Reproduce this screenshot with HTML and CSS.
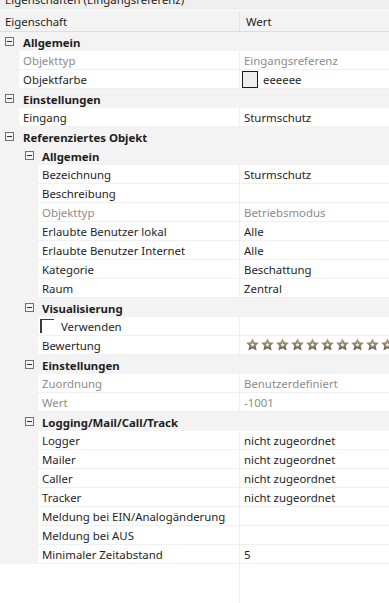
FILE: index.html
```html
<!DOCTYPE html>
<html lang="de">
<head>
<meta charset="utf-8">
<link rel="stylesheet" href="styles.css">
</head>
<body>
<div class="page">
  <div class="title"><span>Eigenschaften (Eingangsreferenz)</span></div>
  <div class="head"><div class="hname">Eigenschaft</div><div class="hval">Wert</div></div>
  <div class="grid">
    <div class="sec l0"><span class="tog"></span><span>Allgemein</span></div>
    <div class="row l1 dis"><div class="name">Objekttyp</div><div class="val">Eingangsreferenz</div></div>
    <div class="row l1"><div class="name">Objektfarbe</div><div class="val"><span class="swatch"></span>eeeeee</div></div>
    <div class="sec l0"><span class="tog"></span><span>Einstellungen</span></div>
    <div class="row l1"><div class="name">Eingang</div><div class="val">Sturmschutz</div></div>
    <div class="sec l0"><span class="tog"></span><span>Referenziertes Objekt</span></div>
    <div class="sec l1s"><span class="tog"></span><span>Allgemein</span></div>
    <div class="row l2"><div class="name">Bezeichnung</div><div class="val">Sturmschutz</div></div>
    <div class="row l2"><div class="name">Beschreibung</div><div class="val"></div></div>
    <div class="row l2 dis"><div class="name">Objekttyp</div><div class="val">Betriebsmodus</div></div>
    <div class="row l2"><div class="name">Erlaubte Benutzer lokal</div><div class="val">Alle</div></div>
    <div class="row l2"><div class="name">Erlaubte Benutzer Internet</div><div class="val">Alle</div></div>
    <div class="row l2"><div class="name">Kategorie</div><div class="val">Beschattung</div></div>
    <div class="row l2"><div class="name">Raum</div><div class="val">Zentral</div></div>
    <div class="sec l1s"><span class="tog"></span><span>Visualisierung</span></div>
    <div class="row l2"><div class="name chk"><span class="box"></span>Verwenden</div><div class="val"></div></div>
    <div class="row l2"><div class="name">Bewertung</div><div class="val stars">
      <svg class="star" viewBox="0 0 12 12"><use href="#st"/></svg>
      <svg class="star" viewBox="0 0 12 12"><use href="#st"/></svg>
      <svg class="star" viewBox="0 0 12 12"><use href="#st"/></svg>
      <svg class="star" viewBox="0 0 12 12"><use href="#st"/></svg>
      <svg class="star" viewBox="0 0 12 12"><use href="#st"/></svg>
      <svg class="star" viewBox="0 0 12 12"><use href="#st"/></svg>
      <svg class="star" viewBox="0 0 12 12"><use href="#st"/></svg>
      <svg class="star" viewBox="0 0 12 12"><use href="#st"/></svg>
      <svg class="star" viewBox="0 0 12 12"><use href="#st"/></svg>
      <svg class="star" viewBox="0 0 12 12"><use href="#st"/></svg>
      <svg class="star" viewBox="0 0 12 12"><use href="#st"/></svg>
    </div></div>
    <div class="sec l1s"><span class="tog"></span><span>Einstellungen</span></div>
    <div class="row l2 dis"><div class="name">Zuordnung</div><div class="val">Benutzerdefiniert</div></div>
    <div class="row l2 dis"><div class="name">Wert</div><div class="val">-1001</div></div>
    <div class="sec l1s"><span class="tog"></span><span>Logging/Mail/Call/Track</span></div>
    <div class="row l2"><div class="name">Logger</div><div class="val">nicht zugeordnet</div></div>
    <div class="row l2"><div class="name">Mailer</div><div class="val">nicht zugeordnet</div></div>
    <div class="row l2"><div class="name">Caller</div><div class="val">nicht zugeordnet</div></div>
    <div class="row l2"><div class="name">Tracker</div><div class="val">nicht zugeordnet</div></div>
    <div class="row l2"><div class="name">Meldung bei EIN/Analogänderung</div><div class="val"></div></div>
    <div class="row l2"><div class="name">Meldung bei AUS</div><div class="val"></div></div>
    <div class="row l2"><div class="name">Minimaler Zeitabstand</div><div class="val">5</div></div>
  </div>
  <div class="filler"><div class="fcol"></div></div>
</div>
<svg width="0" height="0" class="defs">
  <defs>
    <linearGradient id="sg" x1="0" y1="0" x2="0" y2="1">
      <stop offset="0" stop-color="#b3ab93"/>
      <stop offset="1" stop-color="#625a45"/>
    </linearGradient>
    <symbol id="st" viewBox="0 0 12 12">
      <path d="M6 0.2 L7.8 3.9 L11.9 4.4 L8.9 7.2 L9.8 11.6 L6 9.4 L2.2 11.6 L3.1 7.2 L0.1 4.4 L4.2 3.9 Z" fill="url(#sg)"/>
      <path d="M6 4.2 L6.6 5.5 L8 5.7 L7 6.7 L7.3 8.1 L6 7.4 L4.7 8.1 L5 6.7 L4 5.7 L5.4 5.5 Z" fill="#efece2"/>
    </symbol>
  </defs>
</svg>
</body>
</html>
```

FILE: styles.css
```css
html, body {
  margin: 0;
  padding: 0;
  height: 100%;
}
body {
  font-family: "Noto Sans", "Open Sans", sans-serif;
  font-size: 11.4px;
  color: #1e1e1e;
  background: #ffffff;
}
.page {
  display: flex;
  flex-direction: column;
  height: 603px;
  overflow: hidden;
}
.title {
  height: 10px;
  background: #efefef;
  overflow: hidden;
}
.title span {
  display: block;
  padding-left: 5px;
  line-height: 16px;
  margin-top: -8px;
}
.head {
  display: grid;
  grid-template-columns: 240px 1fr;
  height: 22px;
  box-sizing: border-box;
  border-top: 1px solid #ffffff;
  border-bottom: 1px solid #dedede;
  background: #f3f3f3;
}
.hname {
  padding-left: 5px;
  padding-top: 2px;
  line-height: 18px;
  border-right: 1px solid #e4e4e4;
}
.hval {
  padding-left: 6px;
  padding-top: 2px;
  line-height: 18px;
}
.grid {
  background: #f3f3f3;
  display: flex;
  flex-direction: column;
}
.sec {
  height: 19px;
  box-sizing: border-box;
  padding-top: 1px;
  display: flex;
  align-items: center;
  font-weight: bold;
}
.sec.l0 { padding-left: 5px; }
.sec.l1s { padding-left: 25px; }
.sec.l0 .tog { margin-right: 9px; }
.sec.l1s .tog { margin-right: 8px; }
.tog {
  width: 9px;
  height: 9px;
  box-sizing: border-box;
  border: 1px solid #707070;
  position: relative;
  flex: none;
  margin-top: -1px;
}
.tog::after {
  content: "";
  position: absolute;
  left: 1px;
  top: 3px;
  width: 5px;
  height: 1px;
  background: #303030;
}
.row {
  display: grid;
  grid-template-columns: 240px 1fr;
  height: 19px;
}
.name, .val {
  background: #ffffff;
  border-bottom: 1px solid #f0f0f0;
  box-sizing: border-box;
  height: 19px;
  padding-top: 2px;
  line-height: 16px;
  white-space: nowrap;
  overflow: hidden;
  padding-left: 4px;
}
.name {
  border-right: 1px solid #f0f0f0;
}
.row.l1 .name { margin-left: 19px; }
.row.l2 .name { margin-left: 38px; }
.dis .name, .dis .val { color: #8c8c8c; }
.val {
  display: flex;
  align-items: flex-start;
}
.swatch {
  width: 16px;
  height: 17px;
  box-sizing: border-box;
  border: 1px solid #1a1a1a;
  background: #eeeeee;
  margin-left: -2px;
  margin-right: 5px;
  margin-top: -1px;
  flex: none;
}
.chk {
  display: flex;
  align-items: flex-start;
}
.box {
  width: 14px;
  height: 14px;
  box-sizing: border-box;
  border-top: 1px solid #3a3a3a;
  border-left: 2px solid #3a3a3a;
  margin-left: -2px;
  margin-right: 7px;
  flex: none;
}
.stars {
  gap: 2px;
  padding-left: 6px;
  padding-top: 2px;
}
.star {
  width: 13px;
  height: 13px;
  flex: none;
}
.filler {
  flex: 1;
  background: #ffffff;
}
.fcol {
  width: 239px;
  height: 100%;
  border-right: 1px solid #f0f0f0;
}
.defs {
  position: absolute;
  width: 0;
  height: 0;
}
```
